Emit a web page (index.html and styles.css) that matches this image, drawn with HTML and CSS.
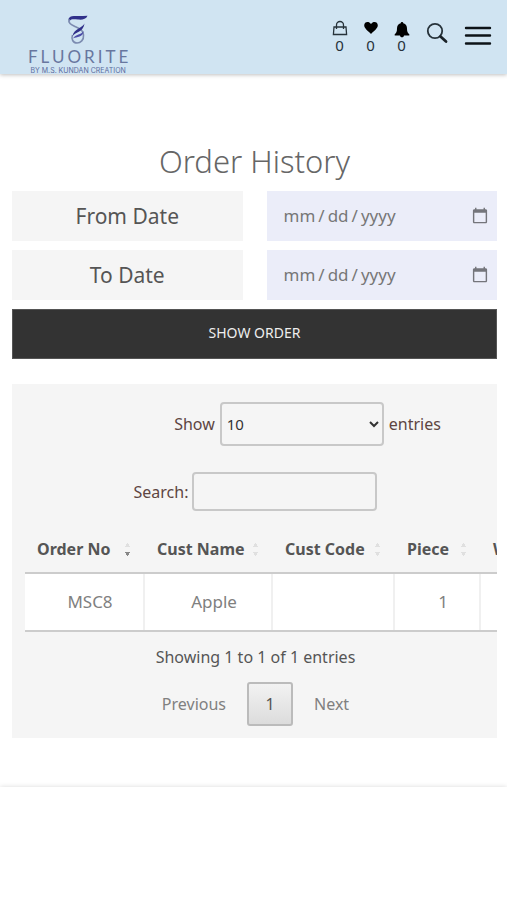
FILE: index.html
```html
<!DOCTYPE html>
<html lang="en">
<head>
<meta charset="utf-8">
<meta name="viewport" content="width=device-width, initial-scale=1">
<title>Order History</title>
<link rel="stylesheet" href="styles.css">
</head>
<body>
<header class="topbar">
  <a class="brand" href="#">
    <svg class="brand-mark" viewBox="0 0 22 30" aria-hidden="true">
      <path d="M1.500 4C3 0 8 1.500 20.500 .8 19 4.500 15 5 11 4.600 7 4.200 4 3.800 2.500 6z" fill="#30308a"/>
      <path d="M2 4C1 8 4 9.500 7 11c4 2 9 3 9.500 9 .5 5-3 8-6.500 8-4 0-6-4-4.500-8" fill="none" stroke="#7c8bb0" stroke-width="1.600"/>
      <path d="M17.500 8.500C15.500 13 7 13.500 5.500 21c3-4 11-4 12-12.500z" fill="#30308a"/>
      <path d="M16.500 16c-2 4-8 3-10.500 7.500 4-2 10-1 10.500-7.500z" fill="#4b4ba8"/>
    </svg>
    <span class="brand-name">FLUORITE</span>
    <span class="brand-sub">BY M.S. KUNDAN CREATION</span>
  </a>
  <nav class="actions" aria-label="Account">
    <a class="action" href="#" aria-label="Bag">
      <svg viewBox="0 0 16 16" aria-hidden="true"><path d="M2 7h12l.6 7.500H1.400zM4.500 9V5a3.500 3.500 0 0 1 7 0v4" fill="none" stroke="#26323a" stroke-width="1.300"/></svg>
      <span>0</span>
    </a>
    <a class="action" href="#" aria-label="Wishlist">
      <svg viewBox="0 0 16 16" aria-hidden="true"><path d="M8 14C5 11 1.200 8.500 1.200 5.300 1.200 1.500 6 .8 8 4c2-3.200 6.800-2.500 6.800 1.300C14.800 8.500 11 11 8 14z"/></svg>
      <span>0</span>
    </a>
    <a class="action" href="#" aria-label="Notifications">
      <svg viewBox="0 -2 16 16" overflow="visible" aria-hidden="true"><path d="M8 0c.9 0 1.300.6 1.300 1.300C12 2 13 4 13 6.500c0 3 .6 4.500 2.300 5.700V13.500H.7v-1.300C2.400 11 3 9.500 3 6.500 3 4 4 2 6.700 1.300 6.700.6 7.100 0 8 0zM6 13.500h4c0 2.400-4 2.400-4 0z"/></svg>
      <span>0</span>
    </a>
    <button class="icon-button search-button" type="button" aria-label="Search">
      <svg viewBox="0 0 22 22" aria-hidden="true"><circle cx="9" cy="9" r="7.200" fill="none" stroke="#26323a" stroke-width="1.800"/><path d="M14.500 14.500l5.500 5" stroke="#1a2228" stroke-width="2.800" stroke-linecap="round"/></svg>
    </button>
    <button class="icon-button menu-button" type="button" aria-label="Menu">
      <svg viewBox="0 0 28 20" aria-hidden="true"><path d="M2 2h24M2 9.500h24M2 17.500h24" stroke="#0c1318" stroke-width="2.400" stroke-linecap="round"/></svg>
    </button>
  </nav>
</header>

<main class="page">
  <h1>Order History</h1>
  <form class="filters">
    <label class="date-label" for="from-date">From Date</label>
    <input class="date-input" id="from-date" type="date">
    <label class="date-label" for="to-date">To Date</label>
    <input class="date-input" id="to-date" type="date">
    <button class="submit" type="button">SHOW ORDER</button>
  </form>

  <section class="panel" aria-label="Orders">
    <div class="length-row">
      <label for="length">Show</label>
      <select id="length"><option>10</option><option>25</option><option>50</option></select>
      <span>entries</span>
    </div>
    <div class="search-row">
      <label for="search">Search:</label>
      <input id="search" type="search">
    </div>
    <div class="table-scroll">
      <table>
        <colgroup><col class="col-order"><col class="col-name"><col class="col-code"><col class="col-piece"><col class="col-weight"></colgroup>
        <thead>
          <tr>
            <th scope="col"><span class="sort desc">Order No</span></th>
            <th scope="col"><span class="sort">Cust Name</span></th>
            <th scope="col"><span class="sort">Cust Code</span></th>
            <th scope="col"><span class="sort">Piece</span></th>
            <th scope="col"><span class="sort">Weight</span></th>
          </tr>
        </thead>
        <tbody>
          <tr><td>MSC8</td><td>Apple</td><td></td><td>1</td><td></td></tr>
        </tbody>
      </table>
    </div>
    <p class="info">Showing 1 to 1 of 1 entries</p>
    <nav class="pager" aria-label="Pages">
      <a href="#">Previous</a>
      <a class="current" href="#" aria-current="page">1</a>
      <a href="#">Next</a>
    </nav>
  </section>
</main>
<footer class="footer"></footer>
</body>
</html>
```
FILE: styles.css
```css
* {
  box-sizing: border-box;
}

body {
  margin: 0;
  background: #fff;
  color: #555;
  font: 16px/24px "Noto Sans", sans-serif;
}

a {
  color: inherit;
  text-decoration: none;
}

button, input, select {
  font: inherit;
}

/* Header */
.topbar {
  display: flex;
  justify-content: space-between;
  align-items: flex-start;
  height: 74px;
  padding: 0 15px 0 28px;
  background: #d0e4f2;
  box-shadow: 0 1px 4px rgba(0, 0, 0, 0.25);
}

.brand {
  display: flex;
  flex-direction: column;
  align-items: center;
  padding-top: 15px;
  color: #68779f;
}

.brand-mark {
  width: 22px;
  height: 30px;
}

.brand-name {
  margin: 2px -3px 0 0;
  font: 17px/20px Lato, sans-serif;
  letter-spacing: 3px;
}

.brand-sub {
  font: 7px/7px Inter, sans-serif;
  white-space: nowrap;
  color: #5b6c9e;
}

.actions {
  display: flex;
  align-items: flex-start;
  padding-top: 20px;
}

.action {
  display: flex;
  flex-direction: column;
  align-items: center;
  width: 31px;
  color: #26323a;
  font-size: 15px;
  line-height: 18px;
}

.action svg {
  width: 16px;
  height: 16px;
}

.icon-button {
  display: flex;
  padding: 0;
  border: 0;
  background: none;
}

.search-button {
  margin: 2px 16px 0 9px;
}

.search-button svg {
  width: 22px;
  height: 22px;
}

.menu-button {
  margin-top: 6px;
}

.menu-button svg {
  width: 28px;
  height: 20px;
}

/* Filters */
.page {
  padding: 65px 10px 49px 12px;
}

h1 {
  margin: 0;
  text-align: center;
  color: #666;
  font-size: 31px;
  font-weight: 300;
  line-height: 44px;
}

.filters {
  display: grid;
  grid-template-columns: 1fr 1fr;
  gap: 9px 24px;
  margin-top: 8px;
}

.date-label,
.date-input {
  height: 50px;
}

.date-label {
  background: #f5f5f5;
  text-align: center;
  font-size: 21px;
  line-height: 50px;
}

.date-input {
  width: 100%;
  min-width: 0;
  padding: 0 8px 0 16px;
  border: 0;
  border-radius: 0;
  background: #ebedf9;
  color: #777;
  font-size: 17px;
}

.date-input::-webkit-datetime-edit-text {
  padding: 0 2px;
}

.date-input::-webkit-calendar-picker-indicator {
  width: 18px;
  height: 18px;
  padding: 0;
  opacity: 0.5;
}

.submit {
  grid-column: 1 / -1;
  height: 50px;
  padding-bottom: 3px;
  border: 1px solid #555;
  background: #333;
  color: #eee;
  font-size: 14px;
}

/* Orders */
.panel {
  margin-top: 25px;
  padding: 18px 0 12px 13px;
  background: #f5f5f5;
}

.length-row,
.search-row {
  display: flex;
  justify-content: center;
  align-items: center;
  color: #5d4542;
}

.length-row {
  gap: 5px;
  padding-left: 104px;
}

.search-row {
  gap: 4px;
  margin-top: 26px;
}

.length-row,
.search-row,
.info,
.pager {
  margin-right: 11px;
}

select,
input[type="search"] {
  border: 2px solid #c8c8c8;
  border-radius: 4px;
  background: transparent;
  color: #333;
}

select {
  width: 164px;
  height: 44px;
  padding: 0 3px 0 1px;
  font-size: 15px;
}

input[type="search"] {
  width: 185px;
  height: 39px;
}

.table-scroll {
  margin-top: 15px;
  overflow: hidden;
}

table {
  width: 555px;
  border-collapse: separate;
  border-spacing: 0;
  table-layout: fixed;
  border-bottom: 2px solid #ccc;
}

.col-order { width: 120px; }
.col-name { width: 128px; }
.col-code { width: 122px; }
.col-piece { width: 86px; }

th {
  height: 48px;
  padding: 0 0 0 12px;
  border-bottom: 2px solid #ccc;
  text-align: left;
  font-size: 16px;
  font-weight: 700;
  white-space: nowrap;
}

td {
  height: 56px;
  padding: 0 0 0 12px;
  border-right: 2px solid #f0f0f0;
  background: #fff;
  color: #808080;
  text-align: center;
  font-size: 17px;
}

.sort {
  display: flex;
  align-items: center;
  justify-content: space-between;
  padding-right: 14px;
}

.sort::after {
  width: 7px;
  height: 13px;
  background:
    conic-gradient(from 145deg at 50% 0, #e0e0e0 70deg, transparent 0) top / 7px 4px no-repeat,
    conic-gradient(from -35deg at 50% 100%, #e0e0e0 70deg, transparent 0) bottom / 7px 4px no-repeat;
  content: "";
}

.sort.desc::after {
  background:
    conic-gradient(from 145deg at 50% 0, #e0e0e0 70deg, transparent 0) top / 7px 4px no-repeat,
    conic-gradient(from -35deg at 50% 100%, #888 70deg, transparent 0) bottom / 7px 4px no-repeat;
}

.info {
  margin-top: 12px;
  margin-bottom: 0;
  text-align: center;
  line-height: 26px;
}

.pager {
  display: flex;
  justify-content: center;
  align-items: center;
  gap: 21px;
  margin-top: 12px;
  color: #808080;
}

.pager .current {
  width: 46px;
  height: 44px;
  border: 2px solid #bbb;
  border-radius: 3px;
  background: linear-gradient(#f2f2f2, #dcdcdc);
  color: #555;
  text-align: center;
  line-height: 40px;
}

.footer {
  height: 100px;
  box-shadow: 0 0 5px rgba(0, 0, 0, 0.15);
}
```
